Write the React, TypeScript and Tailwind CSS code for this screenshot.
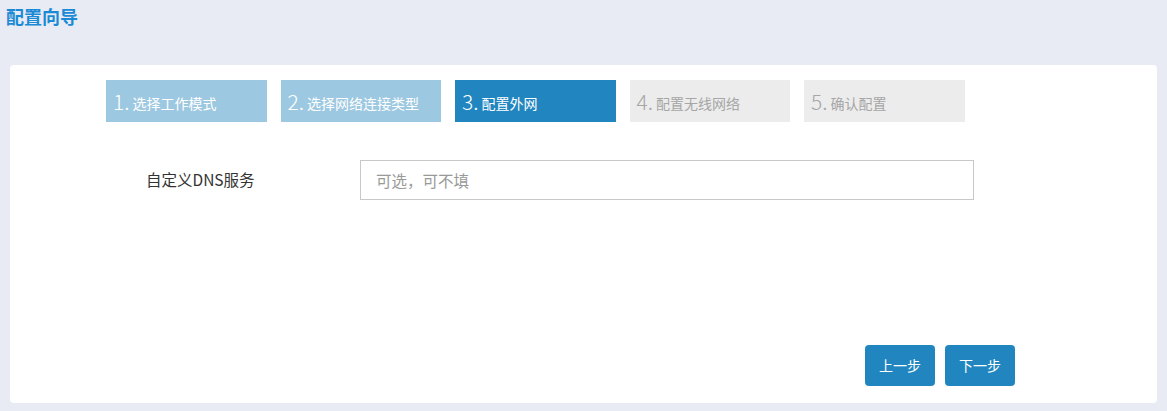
import React from "react";

const steps = [
  { n: "1.", t: "选择工作模式", s: "done" },
  { n: "2.", t: "选择网络连接类型", s: "done" },
  { n: "3.", t: "配置外网", s: "active" },
  { n: "4.", t: "配置无线网络", s: "todo" },
  { n: "5.", t: "确认配置", s: "todo" },
];

export default function App() {
  return (
    <div
      className="w-[1167px] h-[411px] bg-[#e8ebf3] flex flex-col"
      style={{ fontFamily: '"Microsoft YaHei", "Noto Sans CJK SC", sans-serif' }}
    >
      <div className="h-[65px] pl-[6px] pt-[3px]">
        <h1 className="text-[18px] leading-[26px] font-bold text-[#1a8ad6]">配置向导</h1>
      </div>
      <div className="mx-[10px] h-[338px] bg-white rounded-[4px] flex flex-col">
        <div className="mt-[15px] pl-[96px] flex gap-[14px]">
          {steps.map((st) => (
            <div
              key={st.n}
              className={
                "w-[160.5px] h-[42px] flex items-center pl-[7px] pt-[1px] " +
                (st.s === "done"
                  ? "bg-[#9dc8e1] text-white"
                  : st.s === "active"
                  ? "bg-[#2185c0] text-white"
                  : "bg-[#ececec] text-[#a6a6a6]")
              }
            >
              <span className="text-[21px] leading-none font-light">{st.n}</span>
              <span className="text-[14px] leading-none ml-[3px] mt-[3px]">{st.t}</span>
            </div>
          ))}
        </div>
        <div className="mt-[38px] pl-[136px] flex items-center">
          <label className="w-[214px] text-[15.5px] text-[#333]">自定义DNS服务</label>
          <input
            className="w-[614px] h-[40px] border border-[#c8c8c8] px-[15px] text-[15.5px] text-[#333] placeholder:text-[#999] outline-none"
            placeholder="可选，可不填"
          />
        </div>
        <div className="mt-auto mb-[17px] pl-[855px] flex gap-[10px]">
          <button className="w-[70px] h-[41px] rounded-[4px] bg-[#2185c0] text-white text-[14px]">上一步</button>
          <button className="w-[70px] h-[41px] rounded-[4px] bg-[#2185c0] text-white text-[14px]">下一步</button>
        </div>
      </div>
    </div>
  );
}
